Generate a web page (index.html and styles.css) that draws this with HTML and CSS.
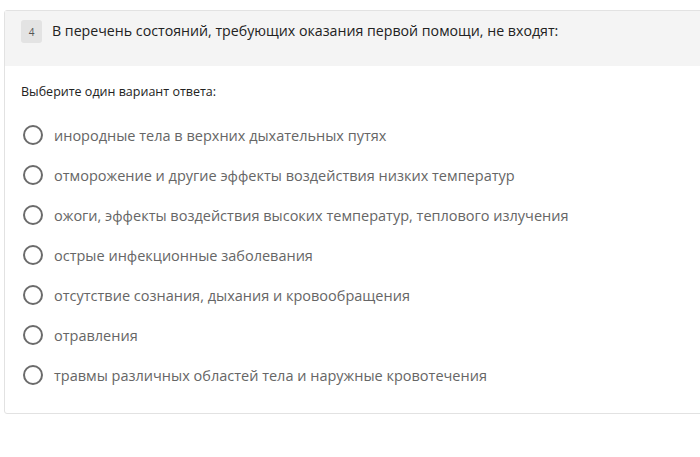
FILE: index.html
```html
<!DOCTYPE html>
<html lang="ru">
<head>
<meta charset="utf-8">
<title>Вопрос 4</title>
<link rel="stylesheet" href="styles.css">
</head>
<body>
<div class="card">
  <div class="card-head">
    <span class="num">4</span>
    <span class="question">В перечень состояний, требующих оказания первой помощи, не входят:</span>
  </div>
  <div class="card-body">
    <div class="hint">Выберите один вариант ответа:</div>
    <ul class="options">
      <li class="option"><span class="radio"></span><span class="label">инородные тела в верхних дыхательных путях</span></li>
      <li class="option"><span class="radio"></span><span class="label">отморожение и другие эффекты воздействия низких температур</span></li>
      <li class="option"><span class="radio"></span><span class="label">ожоги, эффекты воздействия высоких температур, теплового излучения</span></li>
      <li class="option"><span class="radio"></span><span class="label">острые инфекционные заболевания</span></li>
      <li class="option"><span class="radio"></span><span class="label">отсутствие сознания, дыхания и кровообращения</span></li>
      <li class="option"><span class="radio"></span><span class="label">отравления</span></li>
      <li class="option"><span class="radio"></span><span class="label">травмы различных областей тела и наружные кровотечения</span></li>
    </ul>
  </div>
</div>
</body>
</html>
```
FILE: styles.css
```css
html, body {
  margin: 0;
  padding: 0;
  background: #fff;
}
body {
  padding: 10px 0 0 4px;
  font-family: "Open Sans", "Noto Sans", sans-serif;
  color: #333;
  overflow: hidden;
}
.card {
  width: 720px;
  border: 1px solid #e2e2e2;
  border-radius: 3px;
  height: 404px;
  box-sizing: border-box;
}
.card-head {
  background: #f4f4f4;
  height: 55px;
  padding: 9px 0 0 16px;
  box-sizing: border-box;
  display: flex;
  align-items: flex-start;
  gap: 10px;
}
.num {
  width: 21px;
  height: 23px;
  background: #e3e3e3;
  border-radius: 3px;
  font-size: 10px;
  color: #555;
  display: flex;
  align-items: center;
  justify-content: center;
}
.question {
  font-size: 14.2px;
  line-height: 21px;
  color: #222;
}
.card-body {
  padding: 17px 0 0 16px;
}
.hint {
  font-size: 12.5px;
  line-height: 18px;
  color: #222;
}
.options {
  list-style: none;
  margin: 14px 0 0;
  padding: 0;
}
.option {
  height: 40px;
  display: flex;
  align-items: center;
  gap: 11px;
}
.radio {
  width: 16px;
  height: 16px;
  border: 2px solid #6b6b6b;
  border-radius: 50%;
  margin-left: 2px;
}
.label {
  font-size: 14.5px;
  color: #666;
}
```
